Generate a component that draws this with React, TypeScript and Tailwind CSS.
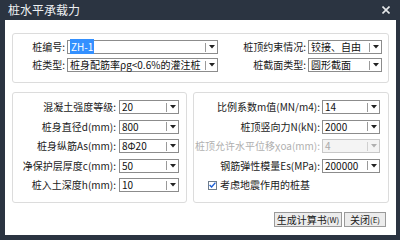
import React from 'react';
import clsx from 'clsx';

const font = { fontFamily: '"Noto Sans CJK SC", "Liberation Sans", sans-serif' };

function Combo({
  value,
  className,
  disabled,
  selected,
}: {
  value: string;
  className: string;
  disabled?: boolean;
  selected?: boolean;
}) {
  return (
    <div
      className={clsx(
        'flex h-[14px] items-center border text-[10px] leading-[12px]',
        disabled ? 'border-[#c8c8c8] bg-[#f4f4f4] text-[#a9a9a9]' : 'border-[#8c8c8c] bg-white text-[#111]',
        className,
      )}
    >
      <div className="flex-1 whitespace-nowrap pl-[2px]">
        {selected ? <span className="bg-[#3390ff] px-px text-white">{value}</span> : value}
      </div>
      <div className={clsx('h-[9px] w-px', disabled ? 'bg-[#d0d0d0]' : 'bg-[#9a9a9a]')} />
      <div className="flex w-[11px] justify-center">
        <svg width="6" height="4" viewBox="0 0 6 4">
          <path d="M0 0h6L3 3.5z" fill={disabled ? '#b0b0b0' : '#222'} />
        </svg>
      </div>
    </div>
  );
}

const leftRows = [
  { label: '混凝土强度等级:', value: '20' },
  { label: '桩身直径d(mm):', value: '800' },
  { label: '桩身纵筋As(mm):', value: '8Φ20' },
  { label: '净保护层厚度c(mm):', value: '50' },
  { label: '桩入土深度h(mm):', value: '10' },
];

const rightRows = [
  { label: '比例系数m值(MN/m4):', value: '14' },
  { label: '桩顶竖向力N(kN):', value: '2000' },
  { label: '桩顶允许水平位移χoa(mm):', value: '4', disabled: true },
  { label: '钢筋弹性模量Es(MPa):', value: '200000' },
];

export default function App() {
  return (
    <div className="flex h-[240px] w-[400px] flex-col bg-[#2b3441] text-[#1a1a1a]" style={font}>
      {/* Title bar */}
      <div className="flex h-[20px] items-center justify-between pl-[8px] pr-[10px]">
        <span className="text-[12px] leading-[14px] text-[#eef0f2]">桩水平承载力</span>
        <svg width="8" height="8" viewBox="0 0 8 8">
          <path d="M0.5 0.5l7 7M7.5 0.5l-7 7" stroke="#e6e8ea" strokeWidth="1.6" />
        </svg>
      </div>

      {/* Body */}
      <div className="mb-[5px] ml-[5px] mr-[4px] flex flex-1 flex-col bg-white pl-[7px] pr-[7px] pt-[13px]">
        {/* Top panel */}
        <div className="grid h-[50px] grid-cols-[52px_151px_1fr_auto_74px] content-start items-center gap-x-[2px] gap-y-[4px] rounded-[3px] border border-[#dcdcdc] pr-[6px] pt-[6px] text-[10px] leading-[12px]">
          <span className="text-right">桩编号:</span>
          <Combo value="ZH-1" className="w-[151px]" selected />
          <span />
          <span className="text-right">桩顶约束情况:</span>
          <Combo value="铰接、自由" className="w-[74px]" />
          <span className="text-right">桩类型:</span>
          <Combo value="桩身配筋率ρg<0.6%的灌注桩" className="w-[151px]" />
          <span />
          <span className="text-right">桩截面类型:</span>
          <Combo value="圆形截面" className="w-[74px]" />
        </div>

        {/* Middle panels */}
        <div className="mt-[9px] flex gap-[6px]">
          <div className="flex h-[111px] w-[175px] flex-col gap-[5.5px] rounded-[3px] border border-[#dcdcdc] pr-[7px] pt-[7px] text-[10px] leading-[12px]">
            {leftRows.map((r) => (
              <div key={r.label} className="flex items-center justify-end gap-[3px]">
                <span className="whitespace-nowrap">{r.label}</span>
                <Combo value={r.value} className="w-[60px]" />
              </div>
            ))}
          </div>
          <div className="flex h-[111px] flex-1 flex-col gap-[5.5px] rounded-[3px] border border-[#dcdcdc] pr-[8px] pt-[7px] text-[10px] leading-[12px]">
            {rightRows.map((r) => (
              <div key={r.label} className="flex items-center justify-end gap-[2px]">
                <span className={clsx('whitespace-nowrap', r.disabled && 'text-[#b0b0b0]')}>{r.label}</span>
                <Combo value={r.value} className="w-[58px]" disabled={r.disabled} />
              </div>
            ))}
            <div className="flex h-[14px] items-center gap-[3px] pl-[14px]">
              <div className="flex h-[9px] w-[9px] items-center justify-center border border-[#6f7d8c] bg-white">
                <svg width="7" height="6" viewBox="0 0 7 6">
                  <path d="M0.6 3l2 2 3.8-4.4" stroke="#1c5fd6" strokeWidth="1.4" fill="none" />
                </svg>
              </div>
              <span>考虑地震作用的桩基</span>
            </div>
          </div>
        </div>

        {/* Buttons */}
        <div className="mt-[9px] flex justify-end gap-[2px] pr-[3px] text-[10px] leading-[12px]">
          <button className="flex h-[15px] w-[68px] items-center justify-center border border-[#9a9a9a] bg-[#ececec]">
            生成计算书<span className="text-[8px]">(W)</span>
          </button>
          <button className="flex h-[15px] w-[42px] items-center justify-center border border-[#9a9a9a] bg-[#ececec]">
            关闭<span className="text-[8px]">(E)</span>
          </button>
        </div>
      </div>
    </div>
  );
}
